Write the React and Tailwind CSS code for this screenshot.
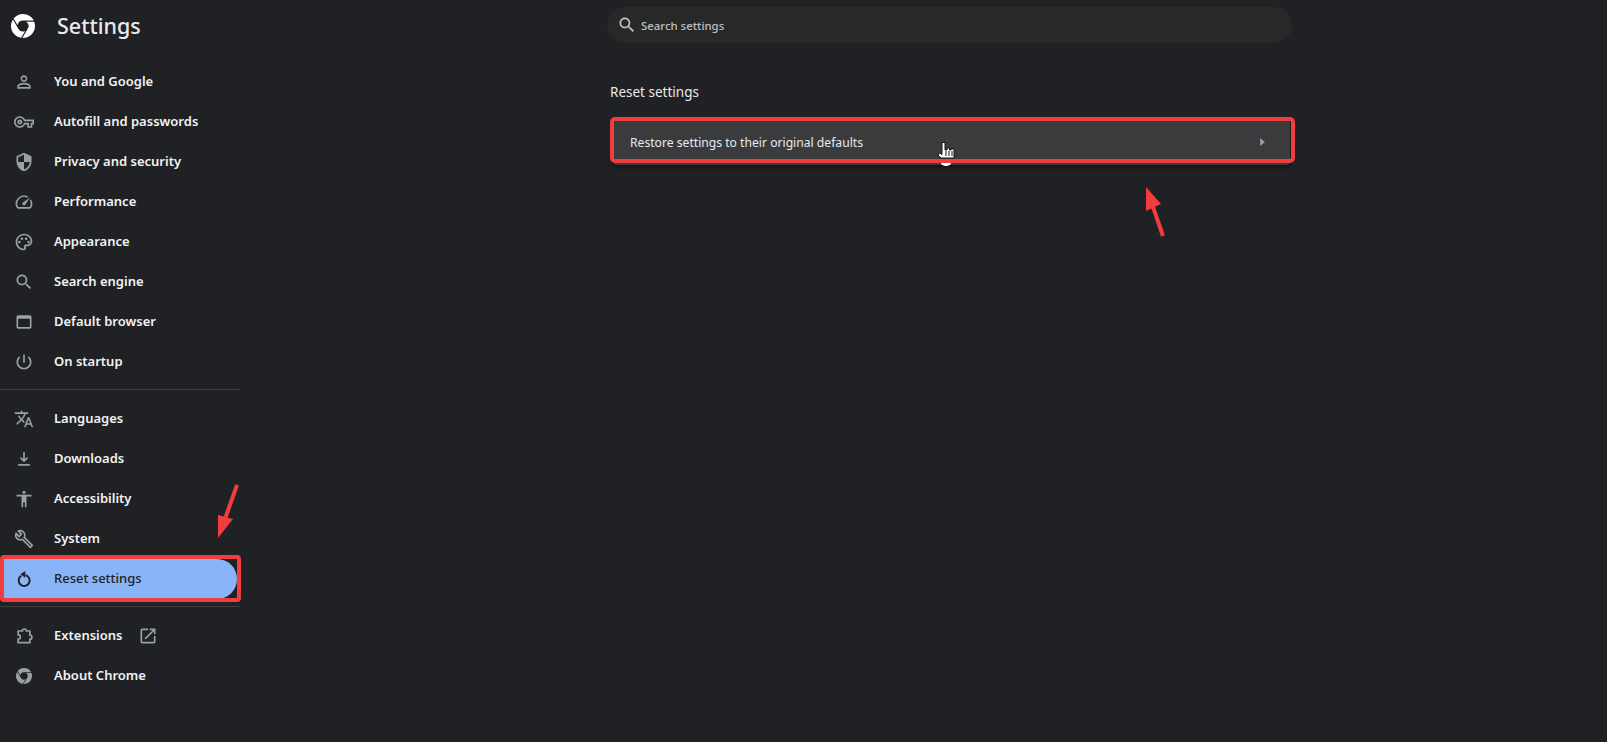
import React from "react";

const P = {
  person: "M12 5.9c1.16 0 2.1.94 2.1 2.1s-.94 2.1-2.1 2.1S9.9 9.16 9.9 8s.94-2.1 2.1-2.1m0 9c2.97 0 6.1 1.46 6.1 2.1v1.1H5.9V17c0-.64 3.13-2.1 6.1-2.1M12 4C9.79 4 8 5.79 8 8s1.79 4 4 4 4-1.79 4-4-1.79-4-4-4zm0 9c-2.67 0-8 1.34-8 4v3h16v-3c0-2.66-5.33-4-8-4z",
  key: "M22 19h-6v-4h-2.68c-1.14 2.42-3.6 4-6.32 4-3.86 0-7-3.14-7-7s3.14-7 7-7c2.72 0 5.17 1.58 6.32 4H24v6h-2v4zm-4-2h2v-4h2v-2H11.94l-.23-.67C11.01 8.34 9.11 7 7 7c-2.76 0-5 2.24-5 5s2.24 5 5 5c2.11 0 4.01-1.34 4.71-3.33l.23-.67H18v4zM7 15c-1.65 0-3-1.35-3-3s1.35-3 3-3 3 1.35 3 3-1.35 3-3 3zm0-4c-.55 0-1 .45-1 1s.45 1 1 1 1-.45 1-1-.45-1-1-1z",
  shield: "M12 1L3 5v6c0 5.55 3.84 10.74 9 12 5.16-1.26 9-6.45 9-12V5l-9-4zm0 10.99h7c-.53 4.12-3.28 7.79-7 8.94V12H5V6.3l7-3.11v8.8z",
  speed: "M20.38 8.57l-1.23 1.85a8 8 0 0 1-.22 7.58H5.07A8 8 0 0 1 15.58 6.85l1.85-1.23A10 10 0 0 0 3.35 19a2 2 0 0 0 1.72 1h13.85a2 2 0 0 0 1.74-1 10 10 0 0 0-.27-10.44zm-9.79 6.84a2 2 0 0 0 2.83 0l5.66-8.49-8.49 5.66a2 2 0 0 0 0 2.83z",
  palette: "M12 22C6.49 22 2 17.51 2 12S6.49 2 12 2s10 4.04 10 9c0 3.31-2.69 6-6 6h-1.77c-.28 0-.5.22-.5.5 0 .12.05.23.13.33.41.47.64 1.06.64 1.67A2.5 2.5 0 0 1 12 22zm0-18c-4.41 0-8 3.59-8 8s3.59 8 8 8c.28 0 .5-.22.5-.5a.54.54 0 0 0-.14-.35c-.41-.46-.63-1.05-.63-1.65a2.5 2.5 0 0 1 2.5-2.5H16c2.21 0 4-1.79 4-4 0-3.86-3.59-7-8-7zM6.5 13.5a1.5 1.5 0 1 0 0-3 1.5 1.5 0 0 0 0 3zm3-4a1.5 1.5 0 1 0 0-3 1.5 1.5 0 0 0 0 3zm5 0a1.5 1.5 0 1 0 0-3 1.5 1.5 0 0 0 0 3zm3 4a1.5 1.5 0 1 0 0-3 1.5 1.5 0 0 0 0 3z",
  search: "M15.5 14h-.79l-.28-.27C15.41 12.59 16 11.11 16 9.5 16 5.91 13.09 3 9.5 3S3 5.91 3 9.5 5.91 16 9.5 16c1.61 0 3.09-.59 4.23-1.57l.27.28v.79l5 4.99L20.49 19l-4.99-5zm-6 0C7.01 14 5 11.99 5 9.5S7.01 5 9.5 5 14 7.01 14 9.5 11.99 14 9.5 14z",
  browser: "M19 4H5c-1.11 0-2 .9-2 2v12c0 1.1.89 2 2 2h14c1.1 0 2-.9 2-2V6c0-1.1-.89-2-2-2zm0 14H5V8h14v10z",
  power: "M13 3h-2v10h2V3zm4.83 2.17l-1.42 1.42C17.99 7.86 19 9.81 19 12c0 3.87-3.13 7-7 7s-7-3.13-7-7c0-2.19 1.01-4.14 2.58-5.42L6.17 5.17C4.23 6.82 3 9.26 3 12c0 4.97 4.03 9 9 9s9-4.03 9-9c0-2.74-1.23-5.18-3.17-6.83z",
  translate: "M12.87 15.07l-2.54-2.51.03-.03c1.74-1.94 2.98-4.17 3.71-6.53H17V4h-7V2H8v2H1v1.99h11.17C11.5 7.92 10.44 9.75 9 11.35 8.07 10.32 7.3 9.19 6.69 8h-2c.73 1.63 1.73 3.17 2.98 4.56l-5.09 5.02L4 19l5-5 3.11 3.11.76-2.04zM18.5 10h-2L12 22h2l1.12-3h4.75L21 22h2l-4.5-12zm-2.62 7l1.62-4.33L19.12 17h-3.24z",
  download: "M12 16l-5-5 1.4-1.4 2.6 2.6V4h2v8.2l2.6-2.6L17 11l-5 5zm-7 4v-2h14v2H5z",
  access: "M12 2c1.1 0 2 .9 2 2s-.9 2-2 2-2-.9-2-2 .9-2 2-2zm9 7h-6v13h-2v-6h-2v6H9V9H3V7h18v2z",
  build: "M22.61 18.99l-9.08-9.08c.93-2.34.45-5.1-1.44-7C9.79.61 6.21.4 3.66 2.25L7.5 6.1 6.08 7.51 2.25 3.69C.4 6.23.61 9.82 2.91 12.11c1.86 1.86 4.57 2.35 6.89 1.48l9.11 9.11c.39.39 1.02.39 1.41 0l2.3-2.3c.4-.38.4-1.01-.01-1.41zm-3 1.6l-9.46-9.46c-.61.45-1.29.72-2 .82-1.36.2-2.79-.21-3.83-1.25C3.37 9.76 2.93 8.5 3 7.26l3.09 3.09 4.24-4.24-3.09-3.09c1.24-.07 2.49.37 3.44 1.31 1.08 1.08 1.49 2.57 1.24 3.96-.12.71-.42 1.37-.88 1.96l9.45 9.45-.88.88z",
  chrome: "M12 0C8.21 0 4.831 1.757 2.632 4.501l3.953 6.848A5.454 5.454 0 0 1 12 6.545h10.691A12 12 0 0 0 12 0zM1.931 5.47A11.943 11.943 0 0 0 0 12c0 6.012 4.42 10.991 10.189 11.864l3.953-6.847a5.45 5.45 0 0 1-6.865-2.29zm13.342 2.166a5.446 5.446 0 0 1 1.45 7.09l.002.001h-.002l-5.344 9.257c.206.01.413.016.621.016 6.627 0 12-5.373 12-12 0-1.54-.29-3.011-.818-4.364z",
  open: "M19 19H5V5h7V3H5c-1.11 0-2 .9-2 2v14c0 1.1.89 2 2 2h14c1.1 0 2-.9 2-2v-7h-2v7zM14 3v2h3.59l-9.83 9.83 1.41 1.41L19 6.41V10h2V3h-7z",
};

function Icon({ d, className = "w-5 h-5 text-[#9aa0a6]" }) {
  return (
    <svg viewBox="0 0 24 24" className={className} fill="currentColor">
      <path d={d} />
    </svg>
  );
}

function NavItem({ icon, label, children }) {
  return (
    <div className="flex items-center h-10">
      <div className="w-[54px] pl-[14px] shrink-0">{icon}</div>
      <span className="text-[13px] font-semibold text-[#f1f3f4]">{label}</span>
      {children}
    </div>
  );
}

function Divider() {
  return <div className="h-px bg-[#3c3d40] w-[240px]" />;
}

const ic = (d) => <Icon d={d} />;

export default function App() {
  return (
    <div
      className="relative flex w-[1607px] h-[742px] overflow-hidden bg-[#202124]"
      style={{ fontFamily: '"Noto Sans", "Open Sans", sans-serif' }}
    >
      <aside className="w-[240px] shrink-0 flex flex-col">
        <header className="flex items-center h-[52px] mb-[10px] pl-[11px]">
          <svg viewBox="0 0 24 24" className="w-6 h-6 text-white" fill="currentColor">
            <path d={P.chrome} />
          </svg>
          <span className="ml-[22px] text-[21.5px] font-medium text-[#e8eaed]">Settings</span>
        </header>
        <nav className="flex flex-col">
          <NavItem icon={ic(P.person)} label="You and Google" />
          <NavItem icon={ic(P.key)} label="Autofill and passwords" />
          <NavItem icon={ic(P.shield)} label="Privacy and security" />
          <NavItem icon={ic(P.speed)} label="Performance" />
          <NavItem icon={ic(P.palette)} label="Appearance" />
          <NavItem icon={ic(P.search)} label="Search engine" />
          <NavItem icon={ic(P.browser)} label="Default browser" />
          <NavItem icon={ic(P.power)} label="On startup" />
          <div className="h-[7px]" />
          <Divider />
          <div className="h-[9px]" />
          <NavItem icon={ic(P.translate)} label="Languages" />
          <NavItem icon={ic(P.download)} label="Downloads" />
          <NavItem icon={ic(P.access)} label="Accessibility" />
          <NavItem icon={ic(P.build)} label="System" />
          <div className="relative flex items-center h-10 w-[237px] rounded-r-full bg-[#8ab4f8]">
            <div className="w-[54px] pl-[14px] shrink-0">
              <svg viewBox="0 0 24 24" className="w-5 h-5" fill="none" stroke="#202124" strokeWidth="2.3">
                <path d="M8.6 8.2A6.6 6.6 0 1 0 14 7.4" />
                <polygon points="7.6,6.4 13.6,2.4 13.6,10.4" fill="#202124" stroke="none" />
              </svg>
            </div>
            <span className="text-[13px] font-medium text-[#202124]">Reset settings</span>
            <div className="absolute left-0 top-[-4px] w-[241px] h-[47px] rounded-[4px] border-[4px] border-[#f23d3f]" />
          </div>
          <div className="h-[7px]" />
          <Divider />
          <div className="h-[9px]" />
          <NavItem
            icon={
              <svg viewBox="0 0 24 24" className="w-5 h-5" fill="none" stroke="#9aa0a6" strokeWidth="2">
                <path d="M5 6h5a2.4 2.4 0 0 1 4.8 0h4.2v5a2.5 2.5 0 0 1 0 5v4H5v-4.2a2.6 2.6 0 0 0 0-5.2z" />
              </svg>
            }
            label="Extensions"
          >
            <Icon d={P.open} className="w-5 h-5 ml-[15px] text-[#9aa0a6]" />
          </NavItem>
          <NavItem
            icon={
              <svg viewBox="0 0 24 24" className="w-4 h-4 ml-[2px] text-[#9aa0a6]" fill="currentColor">
                <path d={P.chrome} />
              </svg>
            }
            label="About Chrome"
          />
        </nav>
      </aside>

      <main className="ml-[367px] w-[685px] flex flex-col">
        <div className="mt-[7px] h-9 rounded-full bg-[#282828] flex items-center pl-[10px]">
          <Icon d={P.search} className="w-5 h-5 text-[#bdc1c6]" />
          <span className="ml-[3px] pl-[1px] pt-[1px] text-[11.4px] font-medium text-[#bdc1c6]">Search settings</span>
        </div>
        <h2 className="mt-[39px] ml-[3px] h-5 leading-5 text-[13.5px] font-normal text-[#e8eaed]">Reset settings</h2>
        <div className="relative mt-[17px] ml-[6px] w-[677px] h-[46px] flex items-center bg-[#3a3b3d] rounded-[4px] shadow-[0_2px_4px_rgba(0,0,0,0.45)]">
          <span className="ml-[17px] pt-[2px] text-[12.15px] text-[#e8eaed]">Restore settings to their original defaults</span>
          <svg viewBox="0 0 6 10" className="absolute left-[647px] top-[19px] w-[5px] h-[8px]" fill="#9aa0a6">
            <polygon points="0,0 6,5 0,10" />
          </svg>
          <svg viewBox="0 0 18 24" className="absolute left-[324px] top-[23px] w-[18px] h-[24px]">
            <ellipse cx="9" cy="21" rx="5" ry="3" fill="#fff" />
            <path
              d="M5 .5h3V8h2V6h2.5v2H14V7h3v9H4L1 13l1.5-2L5 12.5z"
              fill="#fff"
              stroke="#16171a"
              strokeWidth="1"
            />
            <path d="M9 9v5M12 9v5M15 9v5" stroke="#16171a" strokeWidth="1" fill="none" />
          </svg>
          <div className="absolute left-[-3px] top-[-2px] w-[685px] h-[46px] rounded-[5px] border-[4px] border-[#f23d3f]" />
        </div>
      </main>

      <svg className="absolute left-[212px] top-[482px] w-[30px] h-[60px]" viewBox="0 0 30 60" fill="#f23d3f">
        <line x1="25" y1="3" x2="13" y2="37" stroke="#f23d3f" strokeWidth="4" />
        <polygon points="6,56 6,33 21,37" />
      </svg>
      <svg className="absolute left-[1140px] top-[182px] w-[30px] h-[60px]" viewBox="0 0 30 60" fill="#f23d3f">
        <line x1="23" y1="54" x2="12" y2="22" stroke="#f23d3f" strokeWidth="4" />
        <polygon points="6,5 6,29 21,22" />
      </svg>
    </div>
  );
}
